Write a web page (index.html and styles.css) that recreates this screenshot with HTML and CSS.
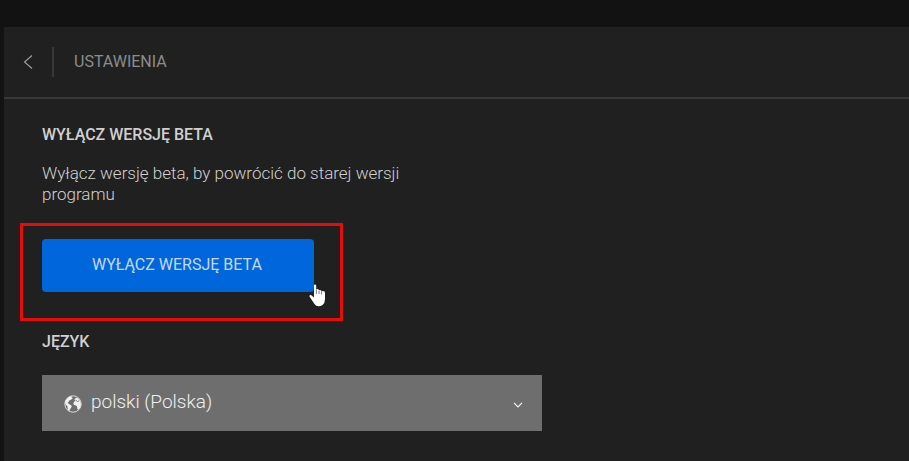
FILE: index.html
```
<!DOCTYPE html>
<html lang="pl">
<head>
    <meta charset="UTF-8">
    <meta name="viewport" content="width=device-width, initial-scale=1.0">
    <title>Ustawienia</title>
    <link rel="stylesheet" href="styles.css">
</head>
<body>

    <div class="panel">
        <header class="header">
            <button class="back" type="button" aria-label="Wstecz">
                <svg width="10" height="16" viewBox="0 0 10 16">
                    <path d="M9 1.500 L1.500 8 L9 14.500" fill="none" stroke="#a0a0a0" stroke-width="1.1"/>
                </svg>
            </button>
            <h1 class="title">USTAWIENIA</h1>
        </header>

        <main class="content">
            <section class="beta">
                <h2 class="label">WYŁĄCZ WERSJĘ BETA</h2>
                <p class="text">Wyłącz wersję beta, by powrócić do starej wersji programu</p>
                <div class="action">
                    <button class="disable" type="button">WYŁĄCZ WERSJĘ BETA</button>
                    <div class="frame"></div>
                    <svg class="cursor" width="17" height="23" viewBox="0 0 17 23">
                        <path d="M5 1.5 Q5 .5 6 .5 Q7.2 .5 7.2 1.7 V6 Q7.4 5 8.5 5 Q9.8 5 9.8 6.2 V7 Q10 6 11 6 Q12.5 6 12.5 7.5 V8 Q13 7 14.2 7 Q16 7.2 16 9 V15 Q16 19 13.5 21 Q12 22.300 9.500 22.300 Q7 22.300 5.500 20 L2.5 15.5 L.6 12.8 Q0 11.500 1.2 11.100 Q2.2 10.900 3.2 11.9 L5 13.5 Z" fill="#fff"/>
                        <path d="M7.4 6 V10 M10 7 V10 M12.6 8 V10.5" fill="none" stroke="#444" stroke-width=".7"/>
                    </svg>
                </div>
            </section>

            <section class="language">
                <label class="label" for="language">JĘZYK</label>
                <div class="picker">
                    <select class="select" id="language">
                        <option>polski (Polska)</option>
                    </select>
                    <svg class="globe" width="18" height="18" viewBox="0 0 18 18">
                        <circle cx="9" cy="9" r="8.200" fill="none" stroke="#f2f2f2" stroke-width=".8"/>
                        <path d="M1.200 6.500 L3 3.500 L6 1.500 L8.500 1.200 L7.500 2.300 L8.800 3.300 L7 4.800 L5.500 5.300 L4.500 7 L3.500 8 L5.500 9.200 L7.800 11 L7 13 L5.800 14.500 L5.300 16.500 L3.800 14.500 L3.500 11.500 L1.200 9 Z" fill="#f2f2f2"/>
                        <path d="M10.300 4.500 L12 2.800 L14 3.300 L16 6 L17 9 L16.500 12 L14.500 14.800 L13.300 14 L13 11.500 L12 10.500 L10 10 L9.300 8.200 L10.300 6.500 L11.500 6 Z" fill="#f2f2f2"/>
                        <path d="M11.500 5 L13.500 6.500 L15 6" fill="none" stroke="#6e6e6e" stroke-width=".9"/>
                    </svg>
                    <svg class="chevron" width="10" height="6" viewBox="0 0 10 6">
                        <path d="M1 .8 L5 4.8 L9 .8" fill="none" stroke="#f2f2f2" stroke-width="1.2"/>
                    </svg>
                </div>
            </section>
        </main>
    </div>

</body>
</html>
```
FILE: styles.css
```
* {
    box-sizing: border-box;
}
body {
    margin: 0;
    padding: 27px 0 0 4px;
    min-height: 100vh;
    display: flex;
    background: #121212;
    font-family: Roboto, sans-serif;
    color: #d0d0d0;
}
.panel {
    flex: 1;
    background: #202020;
}
.header {
    display: flex;
    align-items: center;
    height: 72px;
    border-bottom: 2px solid #383838;
}
.back {
    display: flex;
    align-items: center;
    width: 50px;
    height: 30px;
    padding: 0 0 0 19px;
    border: 0;
    border-right: 2px solid #383838;
    background: none;
}
.title {
    margin: 0 0 0 20px;
    font-size: 16px;
    font-weight: 400;
    line-height: 20px;
    color: #8c8c8c;
}
.content {
    padding: 26px 38px 30px;
}
.label {
    display: block;
    margin: 0;
    font-size: 16px;
    font-weight: 500;
    line-height: 20px;
}
.text {
    max-width: 400px;
    margin: 18px 0 34px;
    font-size: 17px;
    font-weight: 300;
    line-height: 21px;
}
.action {
    position: relative;
    width: 272px;
}
.disable {
    display: block;
    width: 100%;
    height: 53px;
    padding: 0 2px 2px 0;
    border: 0;
    border-radius: 4px;
    background: #0066dc;
    color: #c8d8ec;
    font-family: inherit;
    font-size: 16px;
}
.frame {
    position: absolute;
    inset: -16px -29px -29px -22px;
    border: 3px solid #e60c0c;
    pointer-events: none;
}
.cursor {
    position: absolute;
    right: -12px;
    bottom: -15px;
    pointer-events: none;
}
.language {
    margin-top: 40px;
}
.picker {
    position: relative;
    max-width: 500px;
    margin-top: 23px;
}
.select {
    display: block;
    width: 100%;
    height: 56px;
    padding: 0 48px 4px 49px;
    border: 0;
    border-radius: 0;
    background: #6e6e6e;
    color: #f0f0f0;
    font-family: inherit;
    font-size: 19px;
    font-weight: 300;
    appearance: none;
}
.globe {
    position: absolute;
    left: 22px;
    top: 20px;
    pointer-events: none;
}
.chevron {
    position: absolute;
    right: 19px;
    top: 27px;
    pointer-events: none;
}
```
